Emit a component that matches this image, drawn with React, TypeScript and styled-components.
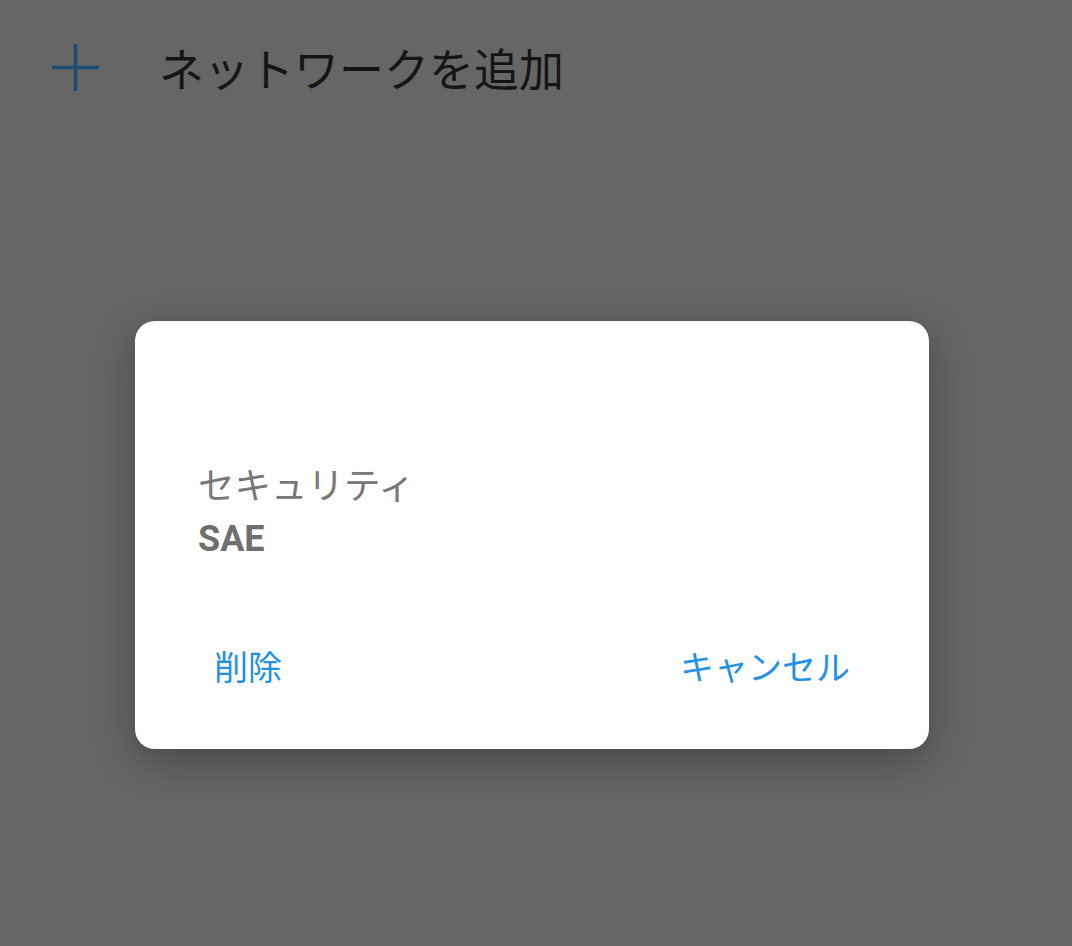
import React, { FC } from 'react';
import styled, { createGlobalStyle } from 'styled-components';

const GlobalStyle = createGlobalStyle`
  html, body {
    margin: 0;
    padding: 0;
    background: #666666;
  }
  body {
    font-family: Roboto, 'Noto Sans CJK JP', sans-serif;
  }
`;

const Page = styled.div`
  width: 1072px;
  height: 946px;
  background: #666666;
  overflow: hidden;
`;

const Header = styled.div`
  display: flex;
  align-items: flex-start;
  height: 141px;
  padding: 44px 0 0 52px;
  box-sizing: border-box;
`;

const PlusIcon = styled.svg`
  width: 47px;
  height: 47px;
  flex-shrink: 0;
`;

const Title = styled.div`
  margin-left: 60px;
  font-family: 'Noto Sans CJK JP', sans-serif;
  font-size: 45px;
  line-height: 50px;
  color: #151515;
  margin-top: -1px;
`;

const Dialog = styled.div`
  margin: 180px 0 0 135px;
  width: 794px;
  height: 428px;
  background: #ffffff;
  border-radius: 20px;
  box-shadow: 0 12px 40px rgba(0, 0, 0, 0.3);
  box-sizing: border-box;
  padding: 140px 79px 0 63px;
  display: flex;
  flex-direction: column;
`;

const Label = styled.div`
  font-family: 'Noto Sans CJK JP', sans-serif;
  font-size: 36.5px;
  line-height: 46px;
  color: #787878;
`;

const Value = styled.div`
  margin-top: 9px;
  font-family: Roboto, sans-serif;
  font-weight: 700;
  font-size: 36px;
  line-height: 46px;
  color: #6f6f6f;
`;

const Actions = styled.div`
  display: flex;
  justify-content: space-between;
  align-items: center;
  margin-top: 82px;
  padding-left: 16px;
`;

const ActionButton = styled.button`
  background: none;
  border: none;
  padding: 0;
  font-family: 'Noto Sans CJK JP', sans-serif;
  font-size: 34px;
  line-height: 44px;
  color: #2391e6;
  cursor: pointer;
`;

const App: FC = () => {
  return (
    <Page>
      <GlobalStyle />
      <Header>
        <PlusIcon viewBox="0 0 47 47">
          <path d="M23.5 0 V47 M0 23.5 H47" stroke="#1b4d75" strokeWidth="3.5" fill="none" />
        </PlusIcon>
        <Title>ネットワークを追加</Title>
      </Header>
      <Dialog>
        <Label>セキュリティ</Label>
        <Value>SAE</Value>
        <Actions>
          <ActionButton>削除</ActionButton>
          <ActionButton>キャンセル</ActionButton>
        </Actions>
      </Dialog>
    </Page>
  );
};

export default App;
